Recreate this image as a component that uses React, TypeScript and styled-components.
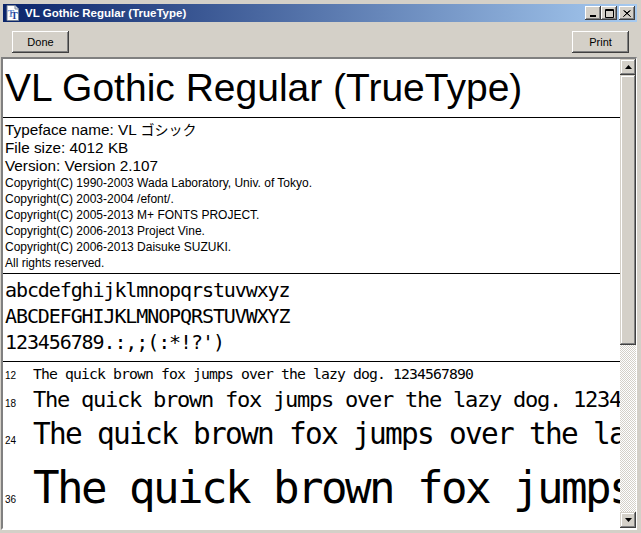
import React from 'react';
import styled, { createGlobalStyle } from 'styled-components';

const GlobalStyle = createGlobalStyle`
  html, body {
    margin: 0;
    padding: 0;
    background: #d4d0c8;
  }
  body {
    width: 641px;
    height: 533px;
    overflow: hidden;
  }
`;

const Window = styled.div`
  width: 641px;
  height: 533px;
  box-sizing: border-box;
  padding: 4px 4px 3px 1px;
  background: #d4d0c8;
  display: flex;
  flex-direction: column;
  font-family: "Liberation Sans", Arial, sans-serif;
`;

const TitleBar = styled.div`
  height: 18px;
  margin-left: 2px;
  display: flex;
  align-items: center;
  padding: 0 2px 0 2px;
  background: linear-gradient(to right, #0a246a, #a6caf0);
  color: #fff;
  font-weight: bold;
  font-size: 11.5px;
  gap: 4px;
`;

const TitleText = styled.span`
  flex: 1;
  white-space: nowrap;
`;

const CaptionButtons = styled.div`
  display: flex;
  align-items: center;
`;

const CaptionButton = styled.div<{ $gap?: boolean }>`
  width: 16px;
  height: 14px;
  box-sizing: border-box;
  margin-left: ${p => (p.$gap ? '2px' : '0')};
  background: #d4d0c8;
  box-shadow: inset -1px -1px #404040, inset 1px 1px #fff, inset -2px -2px #808080;
  display: flex;
  align-items: center;
  justify-content: center;
`;

const Toolbar = styled.div`
  height: 35px;
  box-sizing: border-box;
  padding: 9px 8px 0 11px;
  display: flex;
  justify-content: space-between;
  align-items: flex-start;
`;

const PushButton = styled.button`
  width: 57px;
  height: 22px;
  padding: 0;
  border: none;
  background: #d4d0c8;
  box-shadow: inset -1px -1px #404040, inset 1px 1px #fff, inset -2px -2px #808080;
  font-family: "Liberation Sans", Arial, sans-serif;
  font-size: 11px;
  color: #000;
`;

const ContentFrame = styled.div`
  flex: 1;
  display: flex;
  min-height: 0;
  border-top: 2px solid #808080;
  border-left: 2px solid #808080;
  border-right: 1px solid #fff;
  border-bottom: 2px solid #fff;
  box-shadow: inset 1px 1px #404040;
`;

const Page = styled.div`
  flex: 1;
  min-width: 0;
  background: #fff;
  overflow: hidden;
  display: flex;
  flex-direction: column;
  color: #000;
`;

const Section = styled.div<{ $pt?: number; $pb?: number; $rule?: boolean }>`
  padding: ${p => p.$pt ?? 0}px 0 ${p => p.$pb ?? 0}px 2px;
  border-bottom: ${p => (p.$rule ? '1px solid #000' : 'none')};
  white-space: nowrap;
`;

const BigTitle = styled.div`
  font-size: 39px;
  line-height: 58px;
`;

const InfoLine = styled.div`
  font-size: 15.3px;
  line-height: 18px;
`;

const CJK = styled.span`
  font-family: "Noto Sans CJK JP", sans-serif;
  font-size: 14px;
`;

const SmallLine = styled.div`
  font-size: 12px;
  line-height: 16px;
`;

const Mono = styled.div<{ $size: number; $space: number; $lh: number }>`
  font-family: "DejaVu Sans Mono", monospace;
  font-size: ${p => p.$size}px;
  letter-spacing: ${p => p.$space}px;
  line-height: ${p => p.$lh}px;
`;

const SizeRow = styled.div`
  display: flex;
  align-items: baseline;
`;

const SizeLabel = styled.span`
  width: 28px;
  flex: none;
  font-size: 10px;
  line-height: 1;
`;

const Scrollbar = styled.div`
  width: 16px;
  flex: none;
  display: flex;
  flex-direction: column;
`;

const ArrowButton = styled.div`
  height: 16px;
  flex: none;
  box-sizing: border-box;
  background: #d4d0c8;
  box-shadow: inset -1px -1px #404040, inset 1px 1px #d4d0c8, inset -2px -2px #808080, inset 2px 2px #fff;
  display: flex;
  align-items: center;
  justify-content: center;
`;

const Track = styled.div`
  flex: 1;
  display: flex;
  flex-direction: column;
  background: repeating-conic-gradient(#d4d0c8 0 25%, #fff 0 50%) 0 0 / 2px 2px;
`;

const Thumb = styled.div`
  height: 270px;
  background: #d4d0c8;
  box-shadow: inset -1px -1px #404040, inset 1px 1px #d4d0c8, inset -2px -2px #808080, inset 2px 2px #fff;
`;

const sizes = [
  { pt: 12, text: 'The quick brown fox jumps over the lazy dog. 1234567890', lh: 24 },
  { pt: 18, text: 'The quick brown fox jumps over the lazy dog. 1234567890', lh: 27 },
  { pt: 24, text: 'The quick brown fox jumps over the lazy dog. 1234567890', lh: 42 },
  { pt: 36, text: 'The quick brown fox jumps over the lazy dog. 1234567890', lh: 66 },
];

function FontIcon() {
  return (
    <svg width="16" height="16" viewBox="0 0 16 16">
      <path d="M2 0.5h8l3.5 3.5v11.5h-11.5z" fill="#fff" stroke="#7a8699" />
      <path d="M10 0.5v3.5h3.5" fill="#dfe4ec" stroke="#7a8699" />
      <text x="2.5" y="12" fontFamily="Liberation Serif, serif" fontWeight="bold" fontSize="10" fill="#6b8fd0">T</text>
      <text x="6" y="14" fontFamily="Liberation Serif, serif" fontWeight="bold" fontSize="10" fill="#1c3f9c">T</text>
    </svg>
  );
}

function App() {
  return (
    <>
      <GlobalStyle />
      <Window>
        <TitleBar>
          <FontIcon />
          <TitleText>VL Gothic Regular (TrueType)</TitleText>
          <CaptionButtons>
            <CaptionButton>
              <svg width="8" height="7" viewBox="0 0 8 7"><rect x="1" y="5" width="6" height="2" fill="#000" /></svg>
            </CaptionButton>
            <CaptionButton>
              <svg width="9" height="9" viewBox="0 0 9 9"><path d="M0.5 0.5h8v8h-8z M0.5 1.5h8" fill="none" stroke="#000" /></svg>
            </CaptionButton>
            <CaptionButton $gap>
              <svg width="8" height="7" viewBox="0 0 8 7"><path d="M0.5 0.5l7 6M1.5 0.5l6 6M7.5 0.5l-7 6M6.5 0.5l-6 6" stroke="#000" /></svg>
            </CaptionButton>
          </CaptionButtons>
        </TitleBar>

        <Toolbar>
          <PushButton>Done</PushButton>
          <PushButton>Print</PushButton>
        </Toolbar>

        <ContentFrame>
          <Page>
            <Section $rule>
              <BigTitle>VL Gothic Regular (TrueType)</BigTitle>
            </Section>

            <Section $pt={2} $pb={2} $rule>
              <InfoLine>Typeface name: VL <CJK>ゴシック</CJK></InfoLine>
              <InfoLine>File size: 4012 KB</InfoLine>
              <InfoLine>Version: Version 2.107</InfoLine>
              <SmallLine>Copyright(C) 1990-2003 Wada Laboratory, Univ. of Tokyo.</SmallLine>
              <SmallLine>Copyright(C) 2003-2004 /efont/.</SmallLine>
              <SmallLine>Copyright(C) 2005-2013 M+ FONTS PROJECT.</SmallLine>
              <SmallLine>Copyright(C) 2006-2013 Project Vine.</SmallLine>
              <SmallLine>Copyright(C) 2006-2013 Daisuke SUZUKI.</SmallLine>
              <SmallLine>All rights reserved.</SmallLine>
            </Section>

            <Section $pt={3} $pb={6} $rule>
              <Mono $size={20} $space={-1.1} $lh={26}>abcdefghijklmnopqrstuvwxyz</Mono>
              <Mono $size={20} $space={-1.1} $lh={26}>ABCDEFGHIJKLMNOPQRSTUVWXYZ</Mono>
              <Mono $size={20} $space={-1.1} $lh={26}>123456789.:,;(:*!?')</Mono>
            </Section>

            <Section>
              {sizes.map(s => {
                const nominal = (s.pt * 4) / 3;
                const size = nominal * 0.92;
                const space = nominal * 0.5 - size * 0.602;
                return (
                  <SizeRow key={s.pt}>
                    <SizeLabel>{s.pt}</SizeLabel>
                    <Mono $size={size} $space={space} $lh={s.lh}>{s.text}</Mono>
                  </SizeRow>
                );
              })}
            </Section>
          </Page>

          <Scrollbar>
            <ArrowButton>
              <svg width="7" height="4" viewBox="0 0 7 4"><path d="M3.5 0L7 4H0z" fill="#000" /></svg>
            </ArrowButton>
            <Track>
              <Thumb />
            </Track>
            <ArrowButton>
              <svg width="7" height="4" viewBox="0 0 7 4"><path d="M0 0h7L3.5 4z" fill="#000" /></svg>
            </ArrowButton>
          </Scrollbar>
        </ContentFrame>
      </Window>
    </>
  );
}

export default App;
